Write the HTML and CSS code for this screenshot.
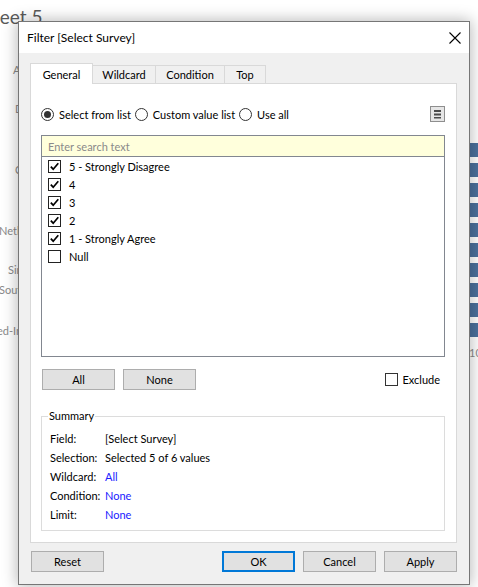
FILE: index.html
```html
<!DOCTYPE html>
<html>
<head>
<meta charset="utf-8">
<title>Filter [Select Survey]</title>
<link rel="stylesheet" href="styles.css">
</head>
<body>
<div class="desk">
  <div class="sheet">
    <div class="sheet-title">Sheet 5</div>
    <div class="row-label l1">Age</div>
    <div class="row-label l2">Dept</div>
    <div class="row-label l3">Country</div>
    <div class="row-label l4">Netherlands</div>
    <div class="row-label l5">Singapore</div>
    <div class="row-label l6">South Africa</div>
    <div class="row-label l7">Mixed-Income</div>
    <div class="bars">
      <div class="bar"></div><div class="bar"></div><div class="bar"></div><div class="bar"></div><div class="bar"></div>
      <div class="bar"></div><div class="bar"></div><div class="bar"></div><div class="bar"></div><div class="bar"></div>
    </div>
    <div class="axis-num">10</div>
  </div>

  <div class="dialog">
    <div class="titlebar">
      <span class="title">Filter [Select Survey]</span>
      <svg class="close" width="12" height="12" viewBox="0 0 12 12"><path d="M0.5 0.5L11.5 11.5M11.5 0.5L0.5 11.5" stroke="#000" stroke-width="1.1" fill="none"/></svg>
    </div>
    <div class="dlg-body">
      <div class="tabs">
        <div class="tab active t-general">General</div>
        <div class="tab t-wildcard">Wildcard</div>
        <div class="tab t-condition">Condition</div>
        <div class="tab t-top">Top</div>
      </div>
      <div class="panel">
        <div class="mode-row">
          <label class="radio"><span class="rb on"></span>Select from list</label>
          <label class="radio"><span class="rb"></span>Custom value list</label>
          <label class="radio"><span class="rb"></span>Use all</label>
          <span class="menu-btn">
            <svg width="15" height="16" viewBox="0 0 15 16"><rect x="0.5" y="0.5" width="14" height="15" fill="#e6e6e6" stroke="#8e8e8e"/><rect x="4" y="4" width="7" height="2" fill="#4a4a4a"/><rect x="4" y="7.5" width="7" height="2" fill="#4a4a4a"/><rect x="4" y="11" width="7" height="1.5" fill="#4a4a4a"/></svg>
          </span>
        </div>
        <div class="listbox">
          <div class="search">Enter search text</div>
          <ul class="items">
            <li><span class="cb on"><svg width="11" height="11" viewBox="0 0 11 11"><path d="M1.8 5.6L4.2 8.2L9.3 2.3" stroke="#000" stroke-width="1.7" fill="none"/></svg></span>5 - Strongly Disagree</li>
            <li><span class="cb on"><svg width="11" height="11" viewBox="0 0 11 11"><path d="M1.8 5.6L4.2 8.2L9.3 2.3" stroke="#000" stroke-width="1.7" fill="none"/></svg></span>4</li>
            <li><span class="cb on"><svg width="11" height="11" viewBox="0 0 11 11"><path d="M1.8 5.6L4.2 8.2L9.3 2.3" stroke="#000" stroke-width="1.7" fill="none"/></svg></span>3</li>
            <li><span class="cb on"><svg width="11" height="11" viewBox="0 0 11 11"><path d="M1.8 5.6L4.2 8.2L9.3 2.3" stroke="#000" stroke-width="1.7" fill="none"/></svg></span>2</li>
            <li><span class="cb on"><svg width="11" height="11" viewBox="0 0 11 11"><path d="M1.8 5.6L4.2 8.2L9.3 2.3" stroke="#000" stroke-width="1.7" fill="none"/></svg></span>1 - Strongly Agree</li>
            <li><span class="cb"></span>Null</li>
          </ul>
        </div>
        <div class="list-actions">
          <button class="btn first">All</button>
          <button class="btn">None</button>
          <label class="exclude"><span class="cb"></span>Exclude</label>
        </div>
        <div class="summary">
          <div class="legend">Summary</div>
          <div class="sum-grid">
            <span class="k">Field:</span><span class="v">[Select Survey]</span>
            <span class="k">Selection:</span><span class="v">Selected 5 of 6 values</span>
            <span class="k">Wildcard:</span><span class="v link">All</span>
            <span class="k">Condition:</span><span class="v link">None</span>
            <span class="k">Limit:</span><span class="v link">None</span>
          </div>
        </div>
      </div>
      <div class="footer">
        <button class="btn first">Reset</button>
        <div class="footer-right">
          <button class="btn ok">OK</button>
          <button class="btn">Cancel</button>
          <button class="btn">Apply</button>
        </div>
      </div>
    </div>
  </div>
</div>
</body>
</html>
```
FILE: styles.css
```css
* { box-sizing: border-box; }
html, body { margin: 0; padding: 0; }
body {
  width: 478px;
  height: 587px;
  overflow: hidden;
  background: #fff;
  font-family: Lato, "Liberation Sans", sans-serif;
  font-size: 11px;
  color: #000;
}
.desk { position: relative; width: 478px; height: 587px; overflow: hidden; }

/* background worksheet */
.sheet { position: absolute; inset: 0; }
.sheet-title { position: absolute; left: -21px; top: 5px; font-size: 19px; color: #5a5a5a; white-space: nowrap; }
.row-label { position: absolute; color: #8a8a8a; font-size: 11px; white-space: nowrap; }
.l1 { left: 13px; top: 63px; }
.l2 { left: 15px; top: 102px; }
.l3 { left: 15px; top: 163px; }
.l4 { left: -1px; top: 224px; }
.l5 { left: 8px; top: 263px; }
.l6 { left: -1px; top: 283px; }
.l7 { left: -21px; top: 324px; }
.bars { position: absolute; left: 420px; top: 143px; display: flex; flex-direction: column; gap: 6px; }
.bar { width: 60px; height: 14px; background: #4a709c; }
.axis-num { position: absolute; left: 469px; top: 346px; color: #8a8a8a; font-size: 11px; }

/* dialog window */
.dialog {
  position: absolute;
  left: 18px;
  top: 21px;
  width: 452px;
  height: 564px;
  border: 1px solid #767676;
  background: #f0f0f0;
  box-shadow: 0 0 14px 1px rgba(0, 0, 0, 0.28);
  display: flex;
  flex-direction: column;
}
.titlebar {
  height: 31px;
  flex: none;
  background: #fff;
  display: flex;
  align-items: center;
  justify-content: space-between;
  padding: 0 8px 0 8px;
  font-size: 12px;
}
.close { display: block; }
.dlg-body { flex: 1; padding: 10px 12px 0 11px; display: flex; flex-direction: column; }

.tabs { display: flex; align-items: flex-end; height: 20px; flex: none; }
.tab {
  height: 18px;
  border: 1px solid #d9d9d9;
  border-bottom: none;
  background: #f0f0f0;
  display: flex;
  align-items: center;
  justify-content: center;
  margin-left: -1px;
}
.tab.active { height: 21px; margin-bottom: -1px; margin-left: 0; background: #fff; position: relative; z-index: 2; }
.t-general { width: 63px; }
.t-wildcard { width: 64px; }
.t-condition { width: 70px; }
.t-top { width: 42px; }

.panel {
  height: 460px;
  flex: none;
  border: 1px solid #d9d9d9;
  background: #fff;
  padding: 22px 11px 0 10px;
  display: flex;
  flex-direction: column;
}

.mode-row { display: flex; align-items: center; height: 16px; }
.radio { display: flex; align-items: center; margin-right: 4px; }
.rb {
  width: 13px; height: 13px;
  border: 1px solid #333;
  border-radius: 50%;
  margin-right: 5px;
  display: flex; align-items: center; justify-content: center;
}
.rb.on::after { content: ""; width: 7px; height: 7px; border-radius: 50%; background: #333; }
.menu-btn { margin-left: auto; display: block; height: 16px; }
.menu-btn svg { display: block; }

.listbox { margin-top: 13px; height: 222px; border: 1px solid #828790; display: flex; flex-direction: column; }
.search { height: 21px; background: #ffffdc; border-bottom: 1px solid #828790; color: #8a8a8a; padding-left: 6px; display: flex; align-items: center; }
.items { list-style: none; margin: 0; padding: 0 0 0 6px; }
.items li { height: 18px; display: flex; align-items: center; }
.cb {
  width: 13px; height: 13px;
  border: 1px solid #222;
  background: #fff;
  margin-right: 8px;
  display: flex; align-items: center; justify-content: center;
  flex: none;
}
.cb svg { display: block; }

.list-actions { margin-top: 12px; display: flex; align-items: center; gap: 8px; }
.btn {
  width: 73px; height: 21px;
  background: #e1e1e1;
  border: 1px solid #adadad;
  font-family: inherit; font-size: 11px; color: #000;
  padding: 0; margin: 0;
}
.list-actions .btn.first { margin-left: 1px; }
.exclude { margin-left: auto; margin-right: 5px; display: flex; align-items: center; }
.exclude .cb { margin-right: 4px; border-color: #333; }

.summary { margin-top: 26px; height: 115px; border: 1px solid #dcdcdc; padding: 0 0 0 8px; }
.legend { margin: -8px 0 0 -2px; line-height: 14px; height: 14px; background: #fff; padding: 0 1px; width: fit-content; }
.sum-grid { margin-top: 6px; display: grid; grid-template-columns: 55px 1fr; grid-auto-rows: 19px; align-items: center; }
.link { color: #1a1aff; }

.footer { margin-top: 8px; display: flex; align-items: center; }
.footer .btn.first { margin-left: 1px; }
.footer-right { margin-left: auto; display: flex; gap: 8px; }
.btn.ok { border: 2px solid #0078d7; }
```
